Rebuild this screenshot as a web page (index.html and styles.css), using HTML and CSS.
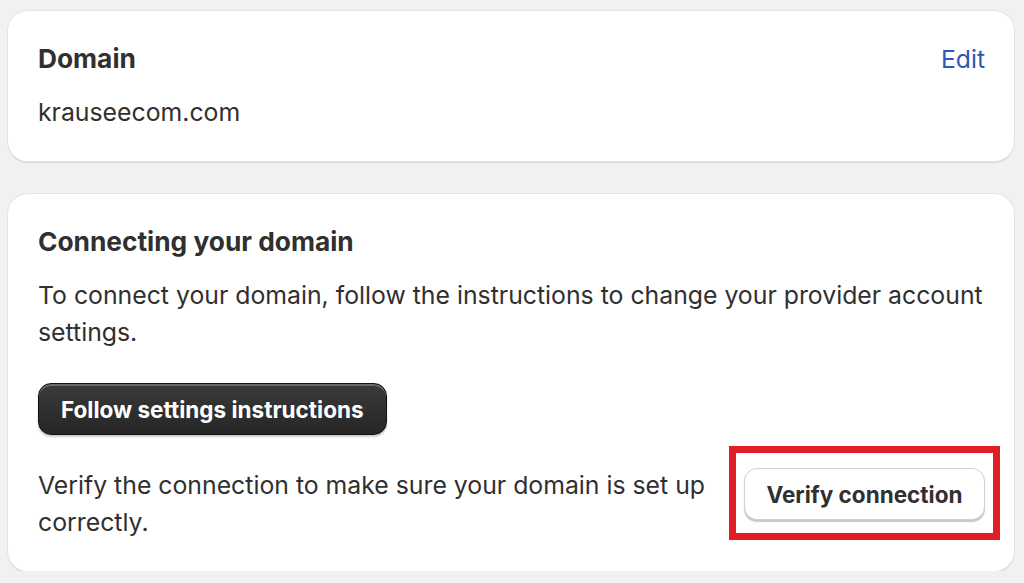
FILE: index.html
```html
<!DOCTYPE html>
<html lang="en">
<head>
    <meta charset="UTF-8">
    <meta name="viewport" content="width=device-width, initial-scale=1.0">
    <title>Domain</title>
    <link rel="stylesheet" href="styles.css">
</head>
<body>
    <div class="page">
        <section class="card">
            <div class="card-head">
                <h2>Domain</h2>
                <a class="link" href="#">Edit</a>
            </div>
            <p class="text">krauseecom.com</p>
        </section>
        <section class="card">
            <h2>Connecting your domain</h2>
            <p class="text">To connect your domain, follow the instructions to change your provider account settings.</p>
            <div class="actions">
                <button class="btn btn-primary">Follow settings instructions</button>
            </div>
            <div class="verify">
                <p class="text">Verify the connection to make sure your domain is set up correctly.</p>
                <div class="marked">
                    <button class="btn btn-secondary">Verify connection</button>
                </div>
            </div>
        </section>
    </div>
</body>
</html>
```

FILE: styles.css
```css
*{
    box-sizing: border-box;
}
body{
    margin: 0;
    background-color: #f1f1f1;
    font-family: Inter, 'Noto Sans', sans-serif;
    color: #303030;
}
.page{
    padding: 11px 10px 0 8px;
    display: flex;
    flex-direction: column;
    gap: 33px;
}
.card{
    background-color: #fff;
    border-radius: 20px;
    padding: 28px 29px 30px 30px;
    box-shadow: 0 0 0 1px #e4e4e4, 0 2px 1px 0 #d6d6d6;
}
.card-head{
    display: flex;
    justify-content: space-between;
    align-items: baseline;
}
h2{
    margin: 0;
    font-size: 26.3px;
    font-weight: 650;
    line-height: 40px;
}
.link{
    color: #2e56b8;
    text-decoration: none;
    font-size: 24.7px;
}
.text{
    margin: 15px 0 0;
    font-size: 24.8px;
    line-height: 37px;
}
.actions{
    margin-top: 32px;
}
.btn{
    font-family: inherit;
    font-size: 22.5px;
    font-weight: 650;
    border-radius: 13px;
    cursor: pointer;
}
.btn-primary{
    height: 52px;
    padding: 0 22px;
    color: #fff;
    background: linear-gradient(#3a3a3a, #262626);
    border: 1px solid #111;
    box-shadow: inset 0 2px 0 rgba(255,255,255,0.25), 0 2px 2px rgba(0,0,0,0.2);
}
.verify{
    display: flex;
    align-items: flex-start;
    gap: 30px;
    margin-top: 32px;
}
.verify .text{
    flex: 1;
    margin: 0;
}
.marked{
    position: relative;
    padding-top: 1px;
}
.marked::after{
    content: '';
    position: absolute;
    top: -21px;
    right: -15px;
    bottom: -20px;
    left: -15px;
    border: 7px solid #e21d26;
}
.btn-secondary{
    height: 52px;
    width: 241px;
    color: #303030;
    background: #fff;
    border: 1px solid #d0d0d0;
    box-shadow: 0 2px 1px #c8c8c8;
}
```
